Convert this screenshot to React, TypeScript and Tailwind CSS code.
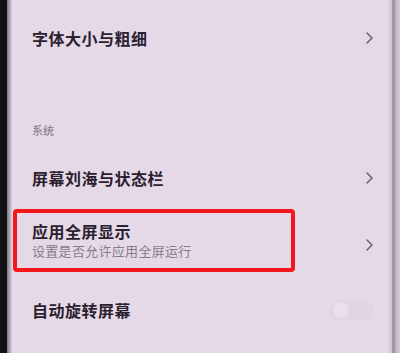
import type { ReactNode } from 'react';

const font = { fontFamily: '"Noto Sans CJK SC", "Noto Sans", sans-serif' };

function Chevron() {
  return (
    <svg width="10" height="14" viewBox="0 0 10 14" className="shrink-0">
      <path d="M3 2l5 5-5 5" fill="none" stroke="#6c6472" strokeWidth="1.6" strokeLinecap="round" strokeLinejoin="round" />
    </svg>
  );
}

function Row({ height, children, right }: { height: string; children: ReactNode; right?: ReactNode }) {
  return (
    <div className={`flex items-center justify-between pl-[20px] pr-[14px] ${height}`}>
      <div className="flex flex-col">{children}</div>
      {right ?? <Chevron />}
    </div>
  );
}

export default function App() {
  return (
    <div className="flex h-[353px] w-[400px] overflow-hidden bg-[#e5d9e7] text-[#2a2130]" style={font}>
      <div className="flex w-[12px] shrink-0">
        <div className="w-[7px] bg-[#111014]" />
        <div className="w-[5px] bg-gradient-to-r from-[#7d7883] to-[#dcd1de]" />
      </div>

      <div className="flex flex-1 flex-col">
        <Row height="h-[76px]">
          <span className="text-[16px] font-bold tracking-[0.5px]">字体大小与粗细</span>
        </Row>
        <div className="ml-[150px] mr-[16px] h-px bg-[#ded3e0]" />

        <div className="mt-[35px] flex h-[36px] items-center pl-[20px] text-[11px] text-[#7d7385]">系统</div>

        <Row height="h-[60px]">
          <span className="text-[16px] font-bold tracking-[0.5px]">屏幕刘海与状态栏</span>
        </Row>

        <div className="relative">
          <div className="pointer-events-none absolute left-[1px] top-[1px] h-[63px] w-[282px] rounded-[4px] border-[4px] border-[#f3171b]" />
          <Row height="h-[74px]">
            <span className="-mt-[10px] text-[16px] font-bold leading-[20px] tracking-[0.5px]">应用全屏显示</span>
            <span className="mt-[1px] text-[13px] leading-[18px] tracking-[0.3px] text-[#857b8b]">设置是否允许应用全屏运行</span>
          </Row>
        </div>

        <Row
          height="h-[56px]"
          right={
            <div className="flex h-[22px] w-[44px] items-center rounded-full bg-[#e0d5e2] pl-[3px]">
              <div className="h-[16px] w-[16px] rounded-full bg-[#e9e0eb]" />
            </div>
          }
        >
          <span className="text-[16px] font-bold tracking-[0.5px]">自动旋转屏幕</span>
        </Row>
      </div>

      <div className="flex w-[12px] shrink-0">
        <div className="w-[4px] bg-gradient-to-r from-[#e5d9e7] to-[#cbc2ce]" />
        <div className="w-[3px] bg-[#9e97a3]" />
        <div className="w-[5px] bg-gradient-to-r from-[#b8b1bc] to-[#d4cdd7]" />
      </div>
    </div>
  );
}
